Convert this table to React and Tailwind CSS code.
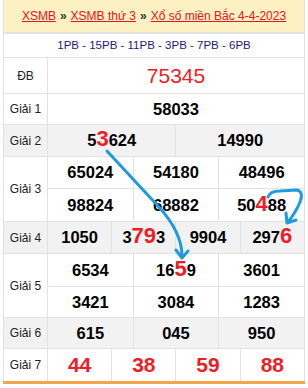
import React from "react";

const red = "text-[#f01d25]";

const Hi = ({ children }) => (
  <span className={`${red} text-[22px] leading-none`}>{children}</span>
);

const Label = ({ children, rowSpan }) => (
  <td
    rowSpan={rowSpan}
    className="w-[44px] border border-[#e2e2e2] text-center text-[12px] text-[#222]"
  >
    {children}
  </td>
);

const Num = ({ children, colSpan }) => (
  <td
    colSpan={colSpan}
    className="border border-[#e2e2e2] text-center text-[16.5px] font-bold text-black"
  >
    {children}
  </td>
);

export default function App() {
  return (
    <div className="relative h-[388px] w-[308px] overflow-hidden bg-white font-['Liberation_Sans',Arial,sans-serif]">
      <div className="ml-[3px] w-[302px]">
        <div className="flex h-[33px] items-center justify-center border-x border-b border-[#e2e2e2] bg-[#fdf0c2] text-[12px]">
          <a href="#" className="text-[#e8141c] underline">XSMB</a>
          <span className="mx-[4px] font-bold text-[#333]">»</span>
          <a href="#" className="text-[#e8141c] underline">XSMB thứ 3</a>
          <span className="mx-[4px] font-bold text-[#333]">»</span>
          <a href="#" className="text-[#e8141c] underline">Xổ số miền Bắc 4-4-2023</a>
        </div>
        <table className="w-full table-fixed border-collapse border-b-[3px] border-b-[#f7a34a]">
          <colgroup>
            <col className="w-[44px]" />
            {Array.from({ length: 12 }).map((_, i) => (
              <col key={i} />
            ))}
          </colgroup>
          <tbody>
            <tr className="h-[24px]">
              <td colSpan={13} className="border border-[#e2e2e2] text-center text-[11.5px] text-[#1a1a86]">
                1PB - 15PB - 11PB - 3PB - 7PB - 6PB
              </td>
            </tr>
            <tr className="h-[36px]">
              <Label>ĐB</Label>
              <td colSpan={12} className={`border border-[#e2e2e2] text-center text-[21px] ${red}`}>
                75345
              </td>
            </tr>
            <tr className="h-[31px]">
              <Label>Giải 1</Label>
              <Num colSpan={12}>58033</Num>
            </tr>
            <tr className="h-[32px] bg-[#f2f2f2]">
              <Label>Giải 2</Label>
              <Num colSpan={6}>
                5<Hi>3</Hi>624
              </Num>
              <Num colSpan={6}>14990</Num>
            </tr>
            <tr className="h-[32px]">
              <Label rowSpan={2}>Giải 3</Label>
              <Num colSpan={4}>65024</Num>
              <Num colSpan={4}>54180</Num>
              <Num colSpan={4}>48496</Num>
            </tr>
            <tr className="h-[33px]">
              <Num colSpan={4}>98824</Num>
              <Num colSpan={4}>68882</Num>
              <Num colSpan={4}>
                50<Hi>4</Hi>88
              </Num>
            </tr>
            <tr className="h-[32px] bg-[#f2f2f2]">
              <Label>Giải 4</Label>
              <Num colSpan={3}>1050</Num>
              <Num colSpan={3}>
                3<Hi>79</Hi>3
              </Num>
              <Num colSpan={3}>9904</Num>
              <Num colSpan={3}>
                297<Hi>6</Hi>
              </Num>
            </tr>
            <tr className="h-[33px]">
              <Label rowSpan={2}>Giải 5</Label>
              <Num colSpan={4}>6534</Num>
              <Num colSpan={4}>
                16<Hi>5</Hi>9
              </Num>
              <Num colSpan={4}>3601</Num>
            </tr>
            <tr className="h-[31px]">
              <Num colSpan={4}>3421</Num>
              <Num colSpan={4}>3084</Num>
              <Num colSpan={4}>1283</Num>
            </tr>
            <tr className="h-[31px] bg-[#f2f2f2]">
              <Label>Giải 6</Label>
              <Num colSpan={4}>615</Num>
              <Num colSpan={4}>045</Num>
              <Num colSpan={4}>950</Num>
            </tr>
            <tr className="h-[34px]">
              <Label>Giải 7</Label>
              {["44", "38", "59", "88"].map((n) => (
                <td
                  key={n}
                  colSpan={3}
                  className={`border border-[#e2e2e2] text-center text-[21px] font-bold ${red}`}
                >
                  {n}
                </td>
              ))}
            </tr>
          </tbody>
        </table>
      </div>

      {/* arrows drawn over the table */}
      <svg
        className="pointer-events-none absolute left-0 top-0"
        width="308"
        height="388"
        viewBox="0 0 308 388"
        fill="none"
        stroke="#1e9be0"
        strokeWidth="3"
        strokeLinecap="round"
        strokeLinejoin="round"
      >
        <path d="M107 151 L158 206 Q182 232 182 256" />
        <path d="M176 250 L182 258 L188 251" />
        <path d="M268 197 Q270 191 280 191 L297 190 Q304 192 300 202 Q296 212 288 222" />
        <path d="M286 213 L287 223 L296 220" />
      </svg>
    </div>
  );
}
